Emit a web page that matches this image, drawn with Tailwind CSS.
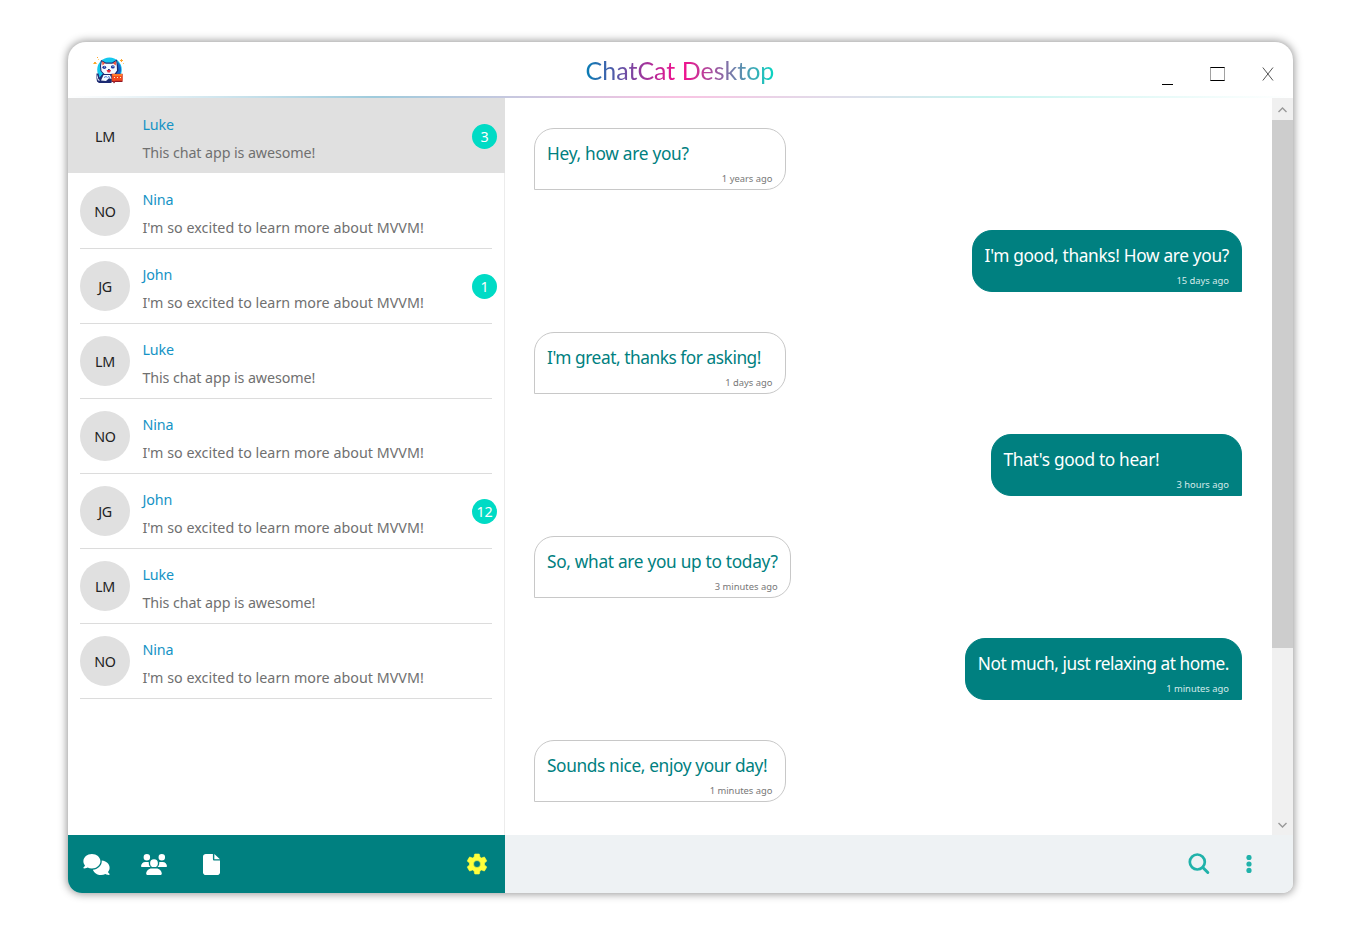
<!DOCTYPE html>
<html lang="en">
<head>
<meta charset="utf-8">
<title>ChatCat Desktop</title>
<script src="https://cdn.jsdelivr.net/npm/@tailwindcss/browser@4"></script>
</head>
<body class="h-[928px] w-[1358px] overflow-hidden bg-white pt-[42px] pl-[67.500px] font-['Noto_Sans',sans-serif]">
<div class="flex h-[851px] w-[1225.500px] flex-col overflow-hidden rounded-t-[18px] rounded-br-[10px] rounded-bl-[14px] bg-white shadow-[0_0_8px_1px_rgba(0,0,0,0.42)]">
  <header class="relative flex h-[56px] shrink-0 items-center">
    <svg class="ml-[25.500px] h-[30px] w-[32px]" viewBox="0 0 32 30">
      <circle cx="16.500" cy="14.700" r="12.300" fill="#14c8ee"/>
      <path d="M25 7q5 6 2 12h-4z" fill="#1466c8"/>
      <path d="M8 5l5 2.500h6L24 4.500l1 6 .5 5-3 4.500H11l-3.500-4-.5-5z" fill="#1c2a72"/>
      <path d="M8.800 6.500l4 2.300h6.500l3.900-2.500.6 4.700.2 4.500-2.500 3.500H11.500L8.500 16 8 11z" fill="#f4f9ff"/>
      <path d="M9 6.300l3 2-2.500 2.200zM23 6.300l-3.200 2 3 2.200z" fill="#ef5038"/>
      <ellipse cx="11.300" cy="12.300" rx="1.900" ry="1.600" fill="#22379c"/>
      <ellipse cx="19.800" cy="11.900" rx="1.900" ry="1.600" fill="#22379c"/>
      <path d="M11 11.500h1v1h-1zM19.500 11h1v1h-1z" fill="#9fd0ff"/>
      <path d="M13.500 15h4.500l-1 2.500h-2.300z" fill="#e0283f"/>
      <path d="M15 14h1.800v1H15z" fill="#1c2a72"/>
      <path d="M3.500 18.500h2l1 4 3-3.500h9v9H6l-2-1.500-.5-3z" fill="#1c2a72"/>
      <path d="M4.300 19.500l1 4.500 2 1.500H5l-1-3zM8 25.500l2.500-5.500h6.500l2 4-3-.8-3 2.800z" fill="#f4f9ff"/>
      <path d="M11 22.500l2-1 1.500 1M15 21.500l2 1" fill="none" stroke="#4d79d0"/>
      <path d="M18.500 18.700h11v8.300h-7.300l-1.200 1.500-1-1.500h-1.500z" fill="#8f1628"/>
      <path d="M19 19h10.500v6.700h-7.700l-.8 1-.6-1H19z" fill="#f44a1e"/>
      <path d="M19.500 19h9.500v2h-9.500z" fill="#ff7a2a"/>
      <path d="M21 22h1v1h-1zM24 22h1v1h-1zM27 22h1v1h-1z" fill="#fff3c0"/>
      <path d="M1 7h2v2H1zM4 2h1v1H4zM28 4h1v1h1v1h-1v1h-1V6h-1V5h1z" fill="#ffa62e"/>
      <path d="M0 8h1v1H0zM3 8h1v1H3zM30 8h1v1h-1zM5 4h1v1H5z" fill="#ffcf70"/>
    </svg>
    <h1 class="absolute top-[11px] left-[518px] bg-[linear-gradient(90deg,#087db5,#fa0a8c_50%,#08d6c2)] bg-clip-text font-['Lato',sans-serif] text-[25px] leading-[34px] whitespace-nowrap text-transparent">ChatCat Desktop</h1>
    <div class="ml-auto flex items-center pr-[19px]">
      <div class="mt-[29px] h-px w-[11px] bg-black"></div>
      <div class="mt-[7px] ml-[37px] h-[14px] w-[15px] border-x border-y border-x-neutral-400 border-y-black"></div>
      <svg class="mt-[7px] ml-[37px] h-[14px] w-[12px]" viewBox="0 0 12 14" fill="none" stroke="#555"><path d="M.8.500 11 13.500M11 .5.8 13.500"/></svg>
    </div>
    <div class="absolute inset-x-0 bottom-0 h-[2px] bg-[linear-gradient(90deg,transparent,#9fcbdc_25%,#f8c4e3_50%,#c9f4f0_75%,transparent)]"></div>
  </header>
  <div class="flex min-h-0 flex-1">
    <aside class="flex w-[437.500px] shrink-0 flex-col border-r border-[#ececec]">
      <div id="chats" class="flex-1 text-[14.300px]"></div>
      <nav class="-mr-px flex h-[58px] items-center bg-[#008080] text-white">
        <svg class="ml-[15.500px] h-[21px] w-[27px]" viewBox="0 0 640 512" fill="currentColor"><path d="M208 352c114.900 0 208-78.800 208-176S322.900 0 208 0S0 78.800 0 176c0 38.600 14.700 74.300 39.600 103.400c-3.500 9.400-8.700 17.700-14.200 24.700c-4.800 6.200-9.700 11-13.300 14.300c-1.800 1.600-3.300 2.900-4.300 3.700c-.5 .4-.9 .7-1.100 .8l-.2 .2C1 327.200-1.400 334.400 .8 340.900S9.100 352 16 352c21.800 0 43.800-5.600 62.100-12.500c9.200-3.500 17.800-7.400 25.200-11.400C134.100 343.300 169.800 352 208 352zM448 176c0 112.300-99.100 196.900-216.500 207C255.800 457.400 336.400 512 432 512c38.200 0 73.900-8.700 104.700-23.900c7.500 4 16 7.900 25.200 11.400c18.300 6.900 40.300 12.500 62.100 12.500c6.900 0 13.100-4.500 15.200-11.100c2.100-6.600-.2-13.800-5.800-17.900l-.2-.2c-.2-.2-.6-.4-1.100-.8c-1-.8-2.500-2-4.300-3.700c-3.600-3.300-8.500-8.100-13.300-14.300c-5.500-7-10.700-15.400-14.200-24.700c24.900-29 39.600-64.700 39.600-103.400c0-92.800-84.900-168.900-192.600-175.500c.4 5.100 .6 10.300 .6 15.500z"/></svg>
        <svg class="ml-[31px] h-[21px] w-[26px]" viewBox="0 0 640 512" fill="currentColor"><path d="M144 0a80 80 0 1 1 0 160A80 80 0 1 1 144 0zM512 0a80 80 0 1 1 0 160A80 80 0 1 1 512 0zM0 298.700C0 239.800 47.800 192 106.700 192h42.700c15.900 0 31 3.500 44.600 9.700c-1.300 7.200-1.900 14.700-1.900 22.300c0 38.200 16.800 72.500 43.300 96H21.300C9.600 320 0 310.400 0 298.700zM405.300 320c26.600-23.500 43.300-57.800 43.300-96c0-7.600-.7-15-1.900-22.300c13.600-6.300 28.700-9.700 44.600-9.700h42.700C592.200 192 640 239.800 640 298.700c0 11.800-9.600 21.300-21.300 21.300H405.300zM224 224a96 96 0 1 1 192 0 96 96 0 1 1-192 0zM128 485.300C128 411.700 187.700 352 261.300 352h117.400C452.300 352 512 411.700 512 485.300c0 14.700-11.900 26.700-26.700 26.700H154.700c-14.700 0-26.700-11.900-26.700-26.700z"/></svg>
        <svg class="ml-[36px] h-[21px] w-[17px]" viewBox="0 0 384 512" preserveAspectRatio="none" fill="currentColor"><path d="M0 64C0 28.700 28.700 0 64 0H224v128c0 17.700 14.300 32 32 32h128v288c0 35.300-28.700 64-64 64H64c-35.300 0-64-28.700-64-64zM384 128H256V0z"/></svg>
        <svg class="mr-[16px] ml-auto h-[24px] w-[24px] text-[#ffff3b]" viewBox="0 0 24 24" fill="currentColor" stroke="currentColor" stroke-width=".6" stroke-linejoin="round"><path d="M12 15.500A3.500 3.500 0 0 1 8.500 12 3.500 3.500 0 0 1 12 8.500a3.500 3.500 0 0 1 3.500 3.500 3.500 3.500 0 0 1-3.500 3.500m7.430-2.530c.04-.32.070-.64.070-.97s-.03-.66-.07-1l2.110-1.630c.19-.15.240-.42.120-.64l-2-3.460c-.12-.22-.39-.31-.61-.22l-2.490 1c-.52-.39-1.060-.73-1.690-.98l-.37-2.650A.506.506 0 0 0 14 2h-4c-.25 0-.46.180-.5.420l-.37 2.650c-.63.250-1.170.590-1.690.980l-2.490-1c-.22-.09-.49 0-.61.220l-2 3.460c-.13.220-.07.490.120.640L4.570 11c-.04.340-.07.670-.07 1s.03.650.070.970l-2.110 1.660c-.19.150-.25.420-.12.640l2 3.460c.12.220.390.300.610.220l2.490-1.010c.52.400 1.060.740 1.690.990l.37 2.650c.04.240.250.420.500.420h4c.25 0 .46-.18.500-.42l.37-2.650c.63-.26 1.170-.59 1.690-.99l2.490 1.010c.22.080.490 0 .61-.22l2-3.460c.12-.22.070-.49-.12-.64z"/></svg>
      </nav>
    </aside>
    <main class="flex min-w-0 flex-1 flex-col">
      <div class="flex min-h-0 flex-1">
        <div id="messages" class="flex flex-1 flex-col gap-[40px] pt-[30px] pr-[30px] pl-[29px]"></div>
        <div class="flex w-[21px] flex-col bg-[#f0f0f0]">
          <div class="flex h-[22px] items-center justify-center"><svg class="mt-[2px] h-[6px] w-[9px]" viewBox="0 0 9 6" fill="none" stroke="#999" stroke-width="1.400"><path d="M.5 5l4-4 4 4"/></svg></div>
          <div class="h-[528px] bg-[#cdcdcd]"></div>
          <div class="mt-auto flex h-[21px] items-center justify-center"><svg class="h-[6px] w-[9px]" viewBox="0 0 9 6" fill="none" stroke="#999" stroke-width="1.400"><path d="M.5 1l4 4 4-4"/></svg></div>
        </div>
      </div>
      <div class="flex h-[58px] items-center justify-end bg-[#eef2f4] pr-[41px] text-[#20b2aa]">
        <svg class="h-[22px] w-[22px]" viewBox="0 0 22 22" fill="none" stroke="currentColor" stroke-width="2.700"><circle cx="9.300" cy="9" r="7.500"/><path d="M14.800 14.500l5 5" stroke-width="3" stroke-linecap="round"/></svg>
        <svg class="ml-[36px] h-[18px] w-[6px]" viewBox="0 0 6 18" fill="currentColor"><circle cx="3" cy="2.500" r="2.600"/><circle cx="3" cy="9" r="2.600"/><circle cx="3" cy="15.400" r="2.600"/></svg>
      </div>
    </main>
  </div>
</div>
<script>
const luke = ['LM', 'Luke', 'This chat app is awesome!', 'tracking-[-0.1px]'];
const nina = ['NO', 'Nina', "I'm so excited to learn more about MVVM!", 'tracking-[0.02px]'];
const john = ['JG', 'John', "I'm so excited to learn more about MVVM!", 'tracking-[0.02px]'];
const chats = [[...luke, 3], nina, [...john, 1], luke, nina, [...john, 12], luke, nina];
document.getElementById('chats').innerHTML = chats.map(([initials, name, text, tracking, count], i) => `
  <div class="${i ? '' : 'bg-[#e0e0e0] -mr-px'} h-[75px] pl-[12.500px]">
    <div class="${i ? 'border-b-[1.500px]' : ''} flex h-[75.500px] w-[412px] border-[#dcdcdc]">
      <div class="mt-[13.400px] flex size-[50px] shrink-0 items-center justify-center rounded-full bg-[#e0e0e0] pt-px tracking-[-0.3px] text-[#222]">${initials}</div>
      <div class="ml-[12.400px] pt-[16px] whitespace-nowrap">
        <p class="leading-[22px] tracking-[-0.1px] text-[#1593c5]">${name}</p>
        <p class="${tracking} mt-[6px] leading-[22px] text-[#707070]">${text}</p>
      </div>
      ${count ? `<div class="mt-[26px] -mr-[5px] ml-auto flex size-[25px] items-center justify-center rounded-full bg-[#00dbc5] pt-px tracking-[-0.3px] text-white">${count}</div>` : ''}
    </div>
  </div>`).join('');
const messages = [
  ['Hey, how are you?', '1 years ago', 'tracking-[-0.28px]'],
  ["I'm good, thanks! How are you?", '15 days ago', 'tracking-[-0.33px]', 1],
  ["I'm great, thanks for asking!", '1 days ago', 'tracking-[-0.45px]'],
  ["That's good to hear!", '3 hours ago', 'tracking-[-0.33px]', 1],
  ['So, what are you up to today?', '3 minutes ago', 'tracking-[-0.31px]'],
  ['Not much, just relaxing at home.', '1 minutes ago', 'tracking-[-0.45px]', 1],
  ['Sounds nice, enjoy your day!', '1 minutes ago', 'tracking-[-0.37px]'],
];
document.getElementById('messages').innerHTML = messages.map(([text, time, tracking, mine]) => `
  <div class="${mine ? 'self-end rounded-br-none rounded-bl-[20px] border-[#008080] bg-[#008080] text-white' : 'self-start rounded-bl-none rounded-br-[20px] border-[#c8c8c8] text-[#008080]'} h-[62px] min-w-[251.500px] rounded-t-[20px] border px-[12px] pt-[13px] whitespace-nowrap">
    <p class="${tracking} text-[17.300px] leading-[24px]">${text}</p>
    <p class="${mine ? 'text-[#d5eaea]' : 'text-[#777]'} mt-[6px] text-right text-[9.400px] leading-[14px]">${time}</p>
  </div>`).join('');
</script>
</body>
</html>
